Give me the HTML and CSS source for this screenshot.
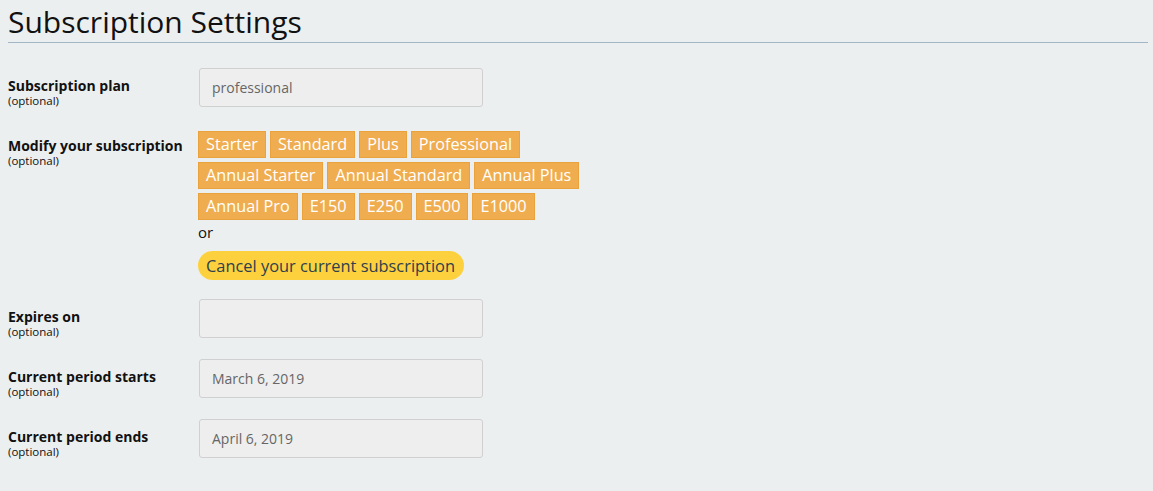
FILE: index.html
```html
<!DOCTYPE html>
<html>
  <head>
    <title>Subscription Settings</title>
    <link rel="stylesheet" href="styles.css">
  </head>
  <body>
    <h1 class="page-title">Subscription Settings</h1>

    <form class="settings">
      <!-- Current plan -->
      <div class="field">
        <div class="field-label">
          <label>Subscription plan</label>
          <small>(optional)</small>
        </div>
        <div class="field-input">
          <input type="text" value="professional" readonly>
        </div>
      </div>

      <!-- Plan change buttons -->
      <div class="field field-plans">
        <div class="field-label">
          <label>Modify your subscription</label>
          <small>(optional)</small>
        </div>
        <div class="field-input">
          <div class="plan-buttons">
            <button type="button" class="plan">Starter</button>
            <button type="button" class="plan">Standard</button>
            <button type="button" class="plan">Plus</button>
            <button type="button" class="plan">Professional</button>
          </div>
          <div class="plan-buttons">
            <button type="button" class="plan">Annual Starter</button>
            <button type="button" class="plan">Annual Standard</button>
            <button type="button" class="plan">Annual Plus</button>
          </div>
          <div class="plan-buttons">
            <button type="button" class="plan">Annual Pro</button>
            <button type="button" class="plan">E150</button>
            <button type="button" class="plan">E250</button>
            <button type="button" class="plan">E500</button>
            <button type="button" class="plan">E1000</button>
          </div>
          <div class="or">or</div>
          <button type="button" class="cancel">Cancel your current subscription</button>
        </div>
      </div>

      <div class="field">
        <div class="field-label">
          <label>Expires on</label>
          <small>(optional)</small>
        </div>
        <div class="field-input">
          <input type="text" value="" readonly>
        </div>
      </div>

      <div class="field">
        <div class="field-label">
          <label>Current period starts</label>
          <small>(optional)</small>
        </div>
        <div class="field-input">
          <input type="text" value="March 6, 2019" readonly>
        </div>
      </div>

      <div class="field">
        <div class="field-label">
          <label>Current period ends</label>
          <small>(optional)</small>
        </div>
        <div class="field-input">
          <input type="text" value="April 6, 2019" readonly>
        </div>
      </div>
    </form>
  </body>
</html>
```

FILE: styles.css
```css
/* Page */
body {
  margin: 0;
  padding: 0 5px 0 8px;
  background-color: #ebeff0;
  font-family: "Open Sans", sans-serif;
  color: #111;
}

.page-title {
  margin: 0;
  padding-top: 2px;
  font-size: 30px;
  font-weight: 400;
  line-height: 40px;
  color: #111;
  border-bottom: 1px solid #a2b6c6;
}

.settings {
  padding-top: 25px;
}

/* Form rows */
.field {
  display: flex;
  margin-bottom: 21px;
}

.field-label {
  width: 191px;
  flex-shrink: 0;
  padding-top: 8px;
}

.field-label label {
  display: block;
  font-size: 14px;
  font-weight: 700;
  line-height: 19px;
}

.field-label small {
  display: block;
  font-size: 11.5px;
  line-height: 12px;
}

.field-input input {
  width: 284px;
  height: 39px;
  box-sizing: border-box;
  padding: 0 12px;
  border: 1px solid #d0d0d0;
  border-radius: 3px;
  background-color: #eeeeee;
  font-family: "Open Sans", sans-serif;
  font-size: 14px;
  color: #666;
}

/* Plan buttons */
.field-plans {
  margin-top: 24px;
  margin-bottom: 19px;
}

.field-plans .field-label {
  padding-top: 5px;
}

.field-plans .field-input {
  margin-left: -1px;
}

.plan-buttons {
  display: flex;
  gap: 4px;
  margin-bottom: 4px;
}

.plan {
  height: 27px;
  padding: 0 7px;
  border: 1px solid #e9a23c;
  border-radius: 0;
  background-color: #efad4f;
  color: #fff;
  font-family: "Open Sans", sans-serif;
  font-size: 16.25px;
  line-height: 25px;
  cursor: pointer;
}

.or {
  font-size: 15px;
  line-height: 17px;
  margin-top: 3px;
}

.cancel {
  margin-top: 10px;
  height: 29px;
  padding: 0 9px 0 8px;
  border: none;
  border-radius: 15px;
  background-color: #fdd13e;
  color: #2e3f4d;
  font-family: "Open Sans", sans-serif;
  font-size: 16.4px;
  cursor: pointer;
}
```
